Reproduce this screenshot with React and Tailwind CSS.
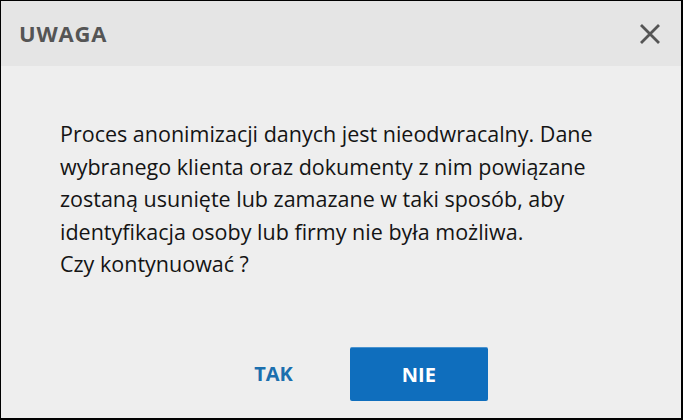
import React from 'react';

const App = () => {
  return (
    <div className="w-[683px] h-[420px] bg-[#eeeeee] border-black border-t border-l border-r-2 border-b-2 flex flex-col" style={{ fontFamily: '"Open Sans", sans-serif' }}>
      {/* Header */}
      <div className="h-[65px] bg-[#e5e5e5] flex items-center justify-between pl-[18px] pr-[19px]">
        <h1 className="text-[22px] font-bold text-[#555555] tracking-[0.8px]">UWAGA</h1>
        <button className="w-6 h-6 flex items-center justify-center text-[#555555]">
          <svg width="22" height="22" viewBox="0 0 22 22" fill="none" stroke="currentColor" strokeWidth="2.8" strokeLinecap="butt">
            <path d="M2 2 L20 20 M20 2 L2 20" />
          </svg>
        </button>
      </div>

      {/* Body */}
      <div className="pl-[59px] pt-[52px] text-[21.5px] leading-[32.5px] text-[#141414] whitespace-nowrap">
        <p>
          Proces anonimizacji danych jest nieodwracalny. Dane<br />
          wybranego klienta oraz dokumenty z nim powiązane<br />
          zostaną usunięte lub zamazane w taki sposób, aby<br />
          identyfikacja osoby lub firmy nie była możliwa.<br />
          Czy kontynuować ?
        </p>
      </div>

      {/* Buttons */}
      <div className="mt-auto mb-[17px] flex items-center justify-center gap-[57px] pl-[60px]">
        <button className="text-[20px] font-bold text-[#1b6fae]">TAK</button>
        <button className="w-[138px] h-[54px] bg-[#0f6ebd] border-t border-[#4a93cf] rounded-[2px] text-white text-[20px] font-bold">NIE</button>
      </div>
    </div>
  );
};

export default App;
